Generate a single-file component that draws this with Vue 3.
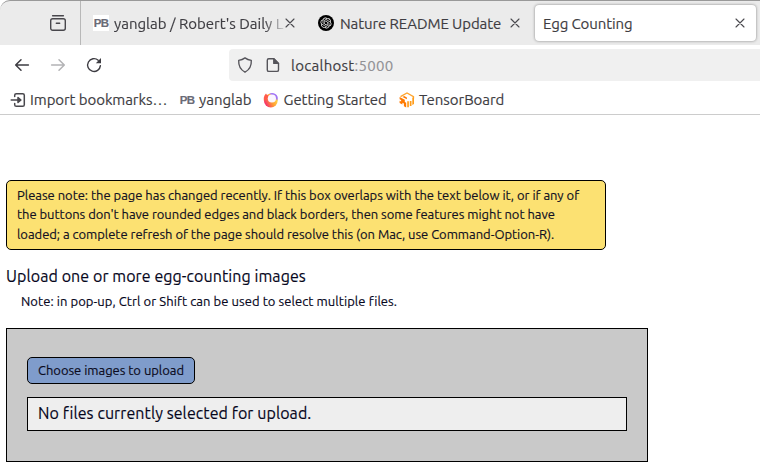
<script setup>
const notice = [
  'Please note: the page has changed recently. If this box overlaps with the text below it, or if any of',
  "the buttons don't have rounded edges and black borders, then some features might not have",
  'loaded; a complete refresh of the page should resolve this (on Mac, use Command-Option-R).'
]
</script>

<template>
  <div class="window">
    <header class="tabs">
      <div class="view-area">
        <svg width="18" height="18" viewBox="0 0 18 18" fill="none" stroke="#48474c" stroke-width="1.4" stroke-linecap="round">
          <path d="M3.6 1.7h10.8M7.3 9.2h3.4" /><rect x="1.7" y="4.7" width="14.6" height="11.6" rx="2" />
        </svg>
      </div>
      <div class="tab tab-lab">
        <span class="pb boxed">PB</span>
        <span class="label fade">yanglab / Robert's Daily L</span>
        <svg class="close" width="10" height="10" viewBox="0 0 10 10"><path d="M1 1l8 8M9 1L1 9" /></svg>
      </div>
      <div class="tab tab-nature">
        <svg width="16" height="16" viewBox="0 0 16 16">
          <circle cx="8" cy="8" r="8" fill="#000" />
          <path transform="translate(2.5 2.5) scale(.458)" fill="#fff" d="M22.2819 9.8211a5.9847 5.9847 0 0 0-.5157-4.9108 6.0462 6.0462 0 0 0-6.5098-2.9A6.0651 6.0651 0 0 0 4.9807 4.1818a5.9847 5.9847 0 0 0-3.9977 2.9 6.0462 6.0462 0 0 0 .7427 7.0966 5.98 5.98 0 0 0 .511 4.9107 6.051 6.051 0 0 0 6.5146 2.9001A5.9847 5.9847 0 0 0 13.2599 24a6.0557 6.0557 0 0 0 5.7718-4.2058 5.9894 5.9894 0 0 0 3.9977-2.9001 6.0557 6.0557 0 0 0-.7475-7.0729zm-9.022 12.6081a4.4755 4.4755 0 0 1-2.8764-1.0408l.1419-.0804 4.7783-2.7582a.7948.7948 0 0 0 .3927-.6813v-6.7369l2.02 1.1686a.071.071 0 0 1 .038.052v5.5826a4.504 4.504 0 0 1-4.4945 4.4944zm-9.6607-4.1254a4.4708 4.4708 0 0 1-.5346-3.0137l.142.0852 4.783 2.7582a.7712.7712 0 0 0 .7806 0l5.8428-3.3685v2.3324a.0804.0804 0 0 1-.0332.0615L9.74 19.9502a4.4992 4.4992 0 0 1-6.1408-1.6464zM2.3408 7.8956a4.485 4.485 0 0 1 2.3655-1.9728V11.6a.7664.7664 0 0 0 .3879.6765l5.8144 3.3543-2.0201 1.1685a.0757.0757 0 0 1-.071 0l-4.8303-2.7865A4.504 4.504 0 0 1 2.3408 7.872zm16.5963 3.8558L13.1038 8.364 15.1192 7.2a.0757.0757 0 0 1 .071 0l4.8303 2.7913a4.4944 4.4944 0 0 1-.6765 8.1042v-5.6772a.79.79 0 0 0-.407-.667zm2.0107-3.0231l-.142-.0852-4.7735-2.7818a.7759.7759 0 0 0-.7854 0L9.409 9.2297V6.8974a.0662.0662 0 0 1 .0284-.0615l4.8303-2.7866a4.4992 4.4992 0 0 1 6.6802 4.66zM8.3065 12.863l-2.02-1.1638a.0804.0804 0 0 1-.038-.0567V6.0742a4.4992 4.4992 0 0 1 7.3757-3.4537l-.142.0805L8.704 5.459a.7948.7948 0 0 0-.3927.6813zm1.0976-2.3654l2.602-1.4998 2.6069 1.4998v2.9994l-2.5974 1.4997-2.6067-1.4997Z" />
        </svg>
        <span class="label">Nature README Update</span>
        <svg class="close" width="10" height="10" viewBox="0 0 10 10"><path d="M1 1l8 8M9 1L1 9" /></svg>
      </div>
      <div class="tab active">
        <span class="label">Egg Counting</span>
        <svg class="close" width="10" height="10" viewBox="0 0 10 10"><path d="M1 1l8 8M9 1L1 9" /></svg>
      </div>
    </header>

    <nav class="toolbar">
      <svg width="16" height="16" viewBox="0 0 16 16" fill="none" stroke="#3d3c42" stroke-width="1.5" stroke-linecap="round" stroke-linejoin="round"><path d="M14.4 8H1.8M7 2.7L1.7 8 7 13.3" /></svg>
      <svg width="16" height="16" viewBox="0 0 16 16" fill="none" stroke="#b3b3b5" stroke-width="1.5" stroke-linecap="round" stroke-linejoin="round"><path d="M1.6 8h12.6M9 2.7L14.3 8 9 13.3" /></svg>
      <svg width="16" height="16" viewBox="0 0 16 16" fill="none" stroke="#3d3c42" stroke-width="1.4" stroke-linecap="round"><path d="M14.4 8.6A6.4 6.4 0 1 1 12.2 3.2" /><path d="M15 1v5.2H9.8z" fill="#3d3c42" stroke="none" /></svg>
      <div class="address">
        <svg width="16" height="16" viewBox="0 0 16 16" fill="none" stroke="#55545a" stroke-width="1.35" stroke-linejoin="round"><path d="M8 .9c1.9 1.5 4 2.200 6.300 2.500.3 5.300-1.700 9.300-6.300 11.800C3.4 12.7 1.4 8.7 1.7 3.4 4 3.1 6.1 2.4 8 .9z" /></svg>
        <svg class="page" width="16" height="16" viewBox="0 0 16 16" fill="none" stroke="#55545a" stroke-width="1.4" stroke-linejoin="round"><path d="M3.8 1.7h5l4.7 4.7v6.5c0 1-.5 1.5-1.5 1.5H3.8c-1 0-1.5-.5-1.5-1.5V3.2c0-1 .5-1.5 1.5-1.5z" /><path d="M8.8 1.7v4.7h4.7z" fill="#55545a" /></svg>
        <span class="url">localhost<i>:5000</i></span>
      </div>
    </nav>

    <nav class="bookmarks">
      <a class="import">
        <svg width="16" height="16" viewBox="0 0 16 16" fill="none" stroke="#48474c" stroke-width="1.5" stroke-linecap="round" stroke-linejoin="round"><path d="M4.7 4.5V3.3c0-1 .6-1.6 1.6-1.6h6.4c1 0 1.6.6 1.6 1.6v9.4c0 1-.6 1.6-1.6 1.6H6.3c-1 0-1.6-.6-1.6-1.6v-1.2M1.2 8h9" /><path d="M8 5.6L10.900 8 8 10.400z" fill="#48474c" /></svg>
        <span>Import bookmarks…</span>
      </a>
      <a class="lab"><span class="pb">PB</span><span>yanglab</span></a>
      <a class="started">
        <svg width="16" height="16" viewBox="0 0 16 16">
          <defs>
            <linearGradient id="fire" x1=".95" y1=".3" x2=".1" y2=".75"><stop offset="0" stop-color="#ffdf45" /><stop offset=".5" stop-color="#ff9a35" /><stop offset="1" stop-color="#f5306c" /></linearGradient>
          </defs>
          <circle cx="7.8" cy="8.6" r="6.9" fill="url(#fire)" />
          <path d="M3 1.4C.8 3.5.2 6.500 1.200 9.500L4.500 6l3-1.200C6 3.800 3.800 3.500 3 1.400z" fill="#ff5a4a" />
          <path d="M6 1.6C9.500 0 13.300 1.300 14.500 4.600c.5 1.500.3 2.800-.2 3.900L11 4.500z" fill="#a274f5" />
          <circle cx="8.900" cy="6.500" r="4.100" fill="#fbf6ff" />
        </svg>
        <span>Getting Started</span>
      </a>
      <a class="board">
        <svg width="16" height="16" viewBox="0 0 16 16">
          <path d="M1.5 4.600L8 .9l6.500 3.700v2" fill="none" stroke="#ffa52e" stroke-width="1.300" />
          <path d="M.6 5l5.200 2.700v2.200l1.400.8v4.800l-2.300-1.300v-2.700l-1.500-.8v1.900L.6 11V8.800l1.500.7V8L.6 7.300z" fill="#ff7a00" />
          <path d="M3.500 4.900L5.200 4l2.700 1.500v1.800z" fill="#ff7a00" />
          <path d="M8.200 9.200h1.700v6H8.200zM10.800 9h1.700v4.900h-1.700zM13.300 5.500H15V12l-1.700 1z" fill="#ff9c1a" />
        </svg>
        <span>TensorBoard</span>
      </a>
    </nav>

    <main>
      <p class="notice"><span v-for="line in notice" :key="line">{{ line }}</span></p>
      <h1>Upload one or more egg-counting images</h1>
      <p class="note">Note: in pop-up, Ctrl or Shift can be used to select multiple files.</p>
      <form class="upload" @submit.prevent>
        <button type="button">Choose images to upload</button>
        <div class="preview">No files currently selected for upload.</div>
      </form>
    </main>
  </div>
</template>

<style>
body { background: #fff; overflow: hidden; }
</style>

<style scoped>
* { box-sizing: border-box; }
.window { width: 760px; height: 472px; overflow: hidden; font-family: Ubuntu, "Noto Sans", sans-serif; color: #06061c; background: #fff; -webkit-text-stroke: .15px; }
svg { display: block; flex: none; }
.tabs { height: 45px; display: flex; align-items: center; background: #ebebeb; border-top: 1px solid #999; border-top-left-radius: 10px; color: #3e3d42; font-size: 15px; }
.view-area { width: 81px; height: 44px; padding: 13px 0 0 49px; border-right: 1px solid #b8b8b8; }
.tab { display: flex; align-items: center; height: 36px; white-space: nowrap; }
.label { line-height: 22px; padding-top: 2px; }
.close { fill: none; stroke: #4a494e; stroke-width: 1.1; stroke-linecap: round; margin-left: auto; }
.pb { font: bold 11.5px/16px "Liberation Sans", sans-serif; width: 16px; height: 16px; color: #6a6b76; letter-spacing: -.7px; text-align: center; flex: none; }
.boxed { background: #fff; }
.tab-lab { width: 214px; padding-left: 12px; }
.tab-lab .label { margin-left: 5px; width: 171px; }
.fade { -webkit-mask-image: linear-gradient(to right, #000 150px, transparent 174px); mask-image: linear-gradient(to right, #000 150px, transparent 174px); }
.tab-lab .close { margin-left: 0; }
.tab-nature { width: 239px; padding: 0 14px 0 23px; letter-spacing: -.1px; }
.tab-nature .label { margin-left: 6px; }
.active { width: 221px; padding: 0 11px 0 8px; margin-left: 1px; background: #fff; border-radius: 4px; box-shadow: 0 0 3px rgba(0, 0, 0, .45); letter-spacing: -.1px; }
.toolbar { height: 41px; display: flex; align-items: center; padding: 0 0 1px 14px; gap: 20px; }
.address { margin: 0 0 0 107px; flex: 1; height: 32px; display: flex; align-items: center; padding-left: 8px; border-radius: 4px 0 0 4px; background: #f0f0f0; }
.page { margin-left: 12px; }
.url { margin-left: 10px; font-size: 15px; line-height: 20px; padding-top: 1px; letter-spacing: .28px; color: #3e3d42; }
.url i { font-style: normal; color: #919195; }
.bookmarks { height: 29px; display: flex; align-items: center; padding: 0 0 1px 10px; border-bottom: 1px solid #ccc; font-size: 15px; line-height: 22px; color: #3e3d42; }
.bookmarks a { display: flex; align-items: center; white-space: nowrap; }
.import { width: 169px; gap: 4px; letter-spacing: -.08px; }
.lab { width: 84px; gap: 4px; }
.started { width: 136px; gap: 4.5px; letter-spacing: -.07px; }
.board { gap: 4px; letter-spacing: -.05px; }
main { padding: 65px 0 0 6px; }
.notice { margin: 0; width: 600px; height: 70px; padding: 5px 10px; border: 1px solid #000; border-radius: 5px; background: #fce172; font-size: 13px; line-height: 19.5px; color: #100f22; }
.notice span { display: block; white-space: nowrap; letter-spacing: -.035px; }
.notice span:first-child { letter-spacing: -.025px; line-height: 19px; }
h1 { margin: 14px 0 0; font-size: 16px; line-height: 24px; font-weight: 400; letter-spacing: .08px; }
.note { margin: 4px 0 0 15px; font-size: 13px; line-height: 19px; letter-spacing: .07px; }
.upload { margin-top: 17px; width: 642px; height: 134px; padding: 28px 20px; border: 1px solid #000; background: #c9c9c9; }
button { display: block; width: 168px; height: 27px; padding: 0 10px 1px; border: 1px solid #000; border-radius: 5px; background: #7f9ccb; font: 13px/20px Ubuntu, "Noto Sans", sans-serif; letter-spacing: -.03px; color: #0b0b20; text-align: left; white-space: nowrap; }
.preview { margin-top: 13px; height: 34px; padding: 0 10px; border: 1px solid #000; background: #eee; font-size: 16px; line-height: 31px; letter-spacing: .08px; }
</style>
